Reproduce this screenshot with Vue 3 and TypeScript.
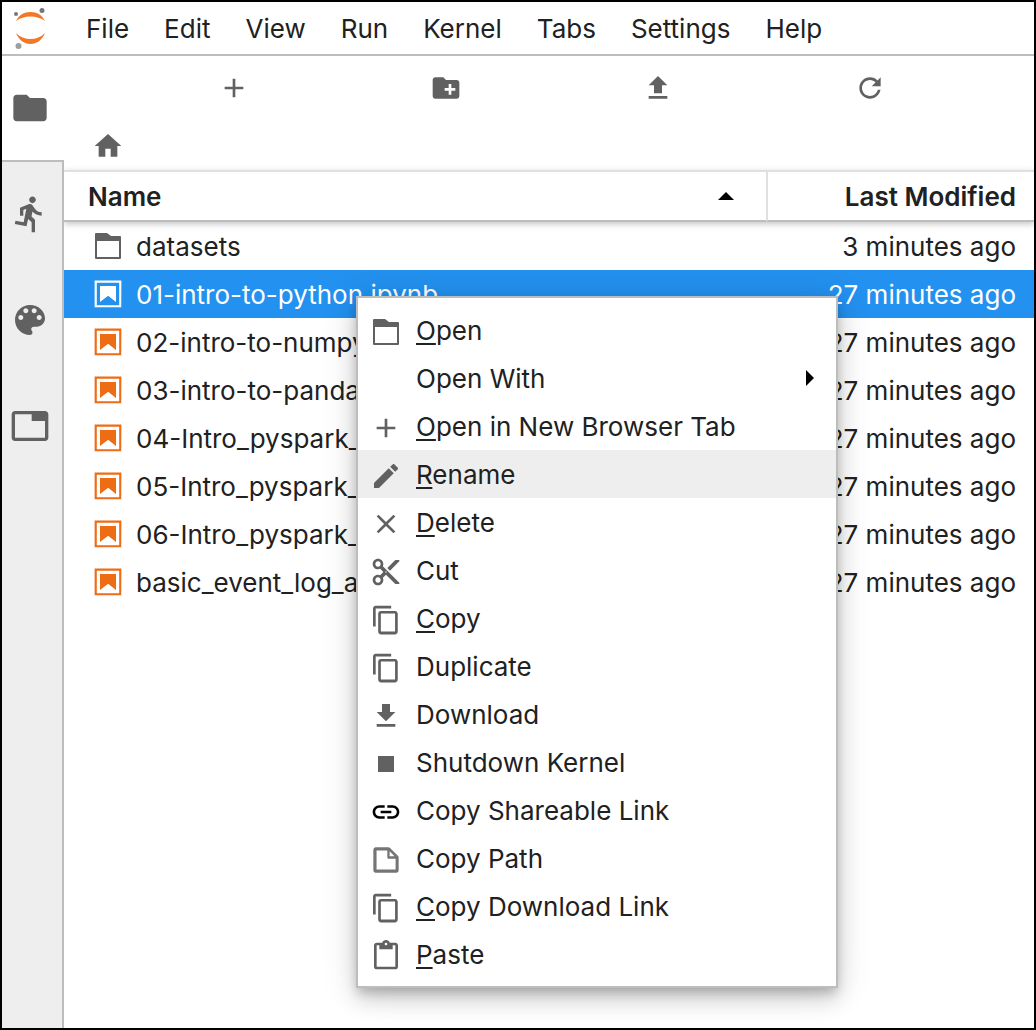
<script setup lang="ts">
import { ref } from 'vue'

interface Icon {
  box: number
  d: string
}

interface FileEntry {
  name: string
  kind: 'folderOutline' | 'notebook'
  modified: string
}

interface MenuItem {
  label: string
  icon?: string
  mnemonic?: boolean
  submenu?: boolean
}

const icons: Record<string, Icon> = {
  folder: { box: 24, d: 'M10 4H4c-1.1 0-1.99.9-1.99 2L2 18c0 1.1.9 2 2 2h16c1.1 0 2-.9 2-2V8c0-1.1-.9-2-2-2h-8l-2-2z' },
  running: { box: 24, d: 'M13.49 5.48c1.1 0 2-.9 2-2s-.9-2-2-2-2 .9-2 2 .9 2 2 2zm-3.6 13.9l1-4.4 2.1 2v6h2v-7.5l-2.1-2 .6-3c1.3 1.5 3.3 2.5 5.5 2.5v-2c-1.9 0-3.5-1-4.3-2.4l-1-1.6c-.4-.6-1-1-1.7-1-.3 0-.5.1-.8.1l-5.2 2.2v4.7h2v-3.4l1.8-.7-1.6 8.1-4.9-1-.4 2 7 1.4z' },
  palette: { box: 24, d: 'M12 3c-4.97 0-9 4.03-9 9s4.03 9 9 9c.83 0 1.5-.67 1.5-1.5 0-.39-.15-.74-.39-1.01-.23-.26-.38-.61-.38-.99 0-.83.67-1.5 1.5-1.5H16c2.76 0 5-2.24 5-5 0-4.42-4.03-8-9-8zm-5.5 9c-.83 0-1.5-.67-1.5-1.5S5.67 9 6.5 9 8 9.67 8 10.5 7.33 12 6.5 12zm3-4C8.67 8 8 7.33 8 6.5S8.67 5 9.5 5s1.5.67 1.5 1.5S10.33 8 9.5 8zm5 0c-.83 0-1.5-.67-1.5-1.5S13.67 5 14.5 5s1.5.67 1.5 1.5S15.33 8 14.5 8zm3 4c-.83 0-1.5-.67-1.5-1.5S16.67 9 17.5 9s1.5.67 1.5 1.5-.67 1.5-1.5 1.5z' },
  tab: { box: 24, d: 'M21 3H3c-1.1 0-2 .9-2 2v14c0 1.1.9 2 2 2h18c1.1 0 2-.9 2-2V5c0-1.1-.9-2-2-2zm0 16H3V5h10v4h8v10z' },
  plus: { box: 24, d: 'M19 13h-6v6h-2v-6H5v-2h6V5h2v6h6v2z' },
  newFolder: { box: 24, d: 'M20 6h-8l-2-2H4c-1.11 0-1.99.89-1.99 2L2 18c0 1.11.89 2 2 2h16c1.11 0 2-.89 2-2V8c0-1.11-.89-2-2-2zm-1 8h-3v3h-2v-3h-3v-2h3V9h2v3h3v2z' },
  upload: { box: 24, d: 'M9 16h6v-6h4l-7-7-7 7h4zm-4 2h14v2H5z' },
  refresh: { box: 18, d: 'M9 13.5c-2.49 0-4.5-2.01-4.5-4.5S6.51 4.5 9 4.5c1.24 0 2.36.52 3.17 1.33L10 8h5V3l-1.76 1.76C12.15 3.68 10.66 3 9 3 5.69 3 3.01 5.69 3.01 9S5.69 15 9 15c2.97 0 5.43-2.16 5.9-5h-1.52c-.46 2-2.24 3.5-4.38 3.5z' },
  home: { box: 24, d: 'M10 20v-6h4v6h5v-8h3L12 3 2 12h3v8z' },
  folderOutline: { box: 32, d: 'M3 4q0-1 1-1h11l4 3h9q1 0 1 1v21q0 1-1 1H4q-1 0-1-1zM5 11v16h22V11z' },
  notebook: { box: 22, d: 'M18.7 3.3v15.4H3.3V3.3h15.4m1.5-1.5H1.8v18.3h18.3l.1-18.3zM16.5 16.5l-5.4-4.3-5.6 4.3v-11h11z' },
  edit: { box: 24, d: 'M3 17.25V21h3.75L17.81 9.94l-3.75-3.75L3 17.25zM20.71 7.04c.39-.39.39-1.02 0-1.41l-2.34-2.34c-.39-.39-1.02-.39-1.41 0l-1.83 1.83 3.75 3.75 1.83-1.83z' },
  close: { box: 24, d: 'M19 6.41L17.59 5 12 10.59 6.41 5 5 6.41 10.59 12 5 17.59 6.41 19 12 13.41 17.59 19 19 17.59 13.41 12z' },
  cut: { box: 24, d: 'M9.64 7.64c.23-.5.36-1.05.36-1.64 0-2.21-1.79-4-4-4S2 3.79 2 6s1.79 4 4 4c.59 0 1.14-.13 1.64-.36L10 12l-2.36 2.36C7.14 14.13 6.59 14 6 14c-2.21 0-4 1.79-4 4s1.79 4 4 4 4-1.79 4-4c0-.59-.13-1.14-.36-1.64L12 14l7 7h3v-1L9.64 7.64zM6 8c-1.1 0-2-.89-2-2s.9-2 2-2 2 .89 2 2-.9 2-2 2zm0 12c-1.1 0-2-.89-2-2s.9-2 2-2 2 .89 2 2-.9 2-2 2zm6-7.5c-.28 0-.5-.22-.5-.5s.22-.5.5-.5.5.22.5.5-.22.5-.5.5zM19 3l-6 6 2 2 7-7V3z' },
  copy: { box: 18, d: 'M11.9 1H3.2C2.4 1 1.7 1.7 1.7 2.5v10.2h1.5V2.5h8.7V1zM14.1 3.9h-8c-.8 0-1.5.7-1.5 1.5v10.2c0 .8.7 1.5 1.5 1.5h8c.8 0 1.5-.7 1.5-1.5V5.4c-.1-.8-.7-1.5-1.5-1.5zM14.1 15.5h-8V5.4h8v10.1z' },
  download: { box: 24, d: 'M19 9h-4V3H9v6H5l7 7 7-7zM5 18v2h14v-2H5z' },
  stop: { box: 24, d: 'M6 6h12v12H6z' },
  link: { box: 24, d: 'M3.9 12c0-1.71 1.39-3.1 3.1-3.1h4V7H7c-2.76 0-5 2.24-5 5s2.24 5 5 5h4v-1.9H7c-1.71 0-3.1-1.39-3.1-3.1zM8 13h8v-2H8v2zm9-6h-4v1.9h4c1.71 0 3.1 1.39 3.1 3.1s-1.39 3.1-3.1 3.1h-4V17h4c2.76 0 5-2.24 5-5s-2.24-5-5-5z' },
  file: { box: 22, d: 'M19.3 8.2l-5.5-5.5c-.3-.3-.7-.5-1.2-.5H3.9c-.8.1-1.6.9-1.6 1.8v14.1c0 .9.7 1.6 1.6 1.6h14.2c.9 0 1.6-.7 1.6-1.6V9.4c.1-.5-.1-.9-.4-1.2zm-5.8-3.3l3.4 3.6h-3.4V4.9zm3.9 12.7H4.7c-.1 0-.2 0-.2-.2V4.7c0-.2.1-.3.2-.3h7.2v4.4s0 .8.3 1.1c.3.3 1.1.3 1.1.3h4.3v7.2s-.1.2-.2.2z' },
  paste: { box: 24, d: 'M19 2h-4.18C14.4.84 13.3 0 12 0c-1.3 0-2.4.84-2.82 2H5c-1.1 0-2 .9-2 2v16c0 1.1.9 2 2 2h14c1.1 0 2-.9 2-2V4c0-1.1-.9-2-2-2zm-7 0c.55 0 1 .45 1 1s-.45 1-1 1-1-.45-1-1 .45-1 1-1zm7 18H5V4h2v3h10V4h2v16z' },
}

const viewBox = (name: string): string => `0 0 ${icons[name].box} ${icons[name].box}`

const menus: string[] = ['File', 'Edit', 'View', 'Run', 'Kernel', 'Tabs', 'Settings', 'Help']

const panels = [
  { icon: 'folder', title: 'File Browser' },
  { icon: 'running', title: 'Running' },
  { icon: 'palette', title: 'Commands' },
  { icon: 'tab', title: 'Tabs' },
]

const tools = [
  { icon: 'plus', title: 'New Launcher' },
  { icon: 'newFolder', title: 'New Folder' },
  { icon: 'upload', title: 'Upload' },
  { icon: 'refresh', title: 'Refresh' },
]

const files: FileEntry[] = [
  { name: 'datasets', kind: 'folderOutline', modified: '3 minutes ago' },
  { name: '01-intro-to-python.ipynb', kind: 'notebook', modified: '27 minutes ago' },
  { name: '02-intro-to-numpy.ipynb', kind: 'notebook', modified: '27 minutes ago' },
  { name: '03-intro-to-pandas.ipynb', kind: 'notebook', modified: '27 minutes ago' },
  { name: '04-Intro_pyspark_.ipynb', kind: 'notebook', modified: '27 minutes ago' },
  { name: '05-Intro_pyspark_.ipynb', kind: 'notebook', modified: '27 minutes ago' },
  { name: '06-Intro_pyspark_.ipynb', kind: 'notebook', modified: '27 minutes ago' },
  { name: 'basic_event_log_analysis.ipynb', kind: 'notebook', modified: '27 minutes ago' },
]

const contextItems: MenuItem[] = [
  { label: 'Open', icon: 'folderOutline', mnemonic: true },
  { label: 'Open With', submenu: true },
  { label: 'Open in New Browser Tab', icon: 'plus', mnemonic: true },
  { label: 'Rename', icon: 'edit', mnemonic: true },
  { label: 'Delete', icon: 'close', mnemonic: true },
  { label: 'Cut', icon: 'cut' },
  { label: 'Copy', icon: 'copy', mnemonic: true },
  { label: 'Duplicate', icon: 'copy' },
  { label: 'Download', icon: 'download' },
  { label: 'Shutdown Kernel', icon: 'stop' },
  { label: 'Copy Shareable Link', icon: 'link' },
  { label: 'Copy Path', icon: 'file' },
  { label: 'Copy Download Link', icon: 'copy', mnemonic: true },
  { label: 'Paste', icon: 'paste', mnemonic: true },
]

const activePanel = ref<number>(0)
const selectedFile = ref<number>(1)
const activeItem = ref<number>(3)
</script>

<template>
  <div class="app">
    <header class="menubar">
      <svg class="logo" viewBox="0 2 40 44" aria-hidden="true">
        <path class="logo-ring" d="M6 17C9 11 14 8 20.500 8S32 11 35 17C31 14 26 12.500 20.500 12.500S10 14 6 17zM6 29C9 36 14 40 20.500 40S32 36 35 29C31 33 26 35 20.500 35S10 33 6 29z" />
        <circle class="logo-dot" cx="6" cy="10" r="2" />
        <circle class="logo-dot" cx="32" cy="6.500" r="2.500" />
        <circle class="logo-dot light" cx="8.500" cy="42" r="3" />
      </svg>
      <nav class="menus">
        <button v-for="menu in menus" :key="menu" type="button">{{ menu }}</button>
      </nav>
    </header>

    <div class="body">
      <aside class="sidebar">
        <button
          v-for="(panel, index) in panels"
          :key="panel.title"
          type="button"
          class="panel-tab"
          :class="{ active: index === activePanel }"
          :aria-label="panel.title"
          @click="activePanel = index"
        >
          <svg class="icon large" :viewBox="viewBox(panel.icon)"><path :d="icons[panel.icon].d" /></svg>
        </button>
      </aside>

      <main class="browser">
        <div class="toolbar">
          <button v-for="tool in tools" :key="tool.title" type="button" :aria-label="tool.title">
            <svg class="icon" :viewBox="viewBox(tool.icon)"><path :d="icons[tool.icon].d" /></svg>
          </button>
        </div>
        <div class="crumbs">
          <a href="#" aria-label="Home">
            <svg class="icon" :viewBox="viewBox('home')"><path :d="icons.home.d" /></svg>
          </a>
        </div>

        <table class="listing">
          <thead>
            <tr>
              <th scope="col" class="name">
                <div class="heading">
                  <span class="text">Name</span>
                  <svg class="sort" viewBox="0 0 16 8" aria-hidden="true"><path d="M0 8L8 0l8 8z" /></svg>
                </div>
              </th>
              <th scope="col" class="modified">
                <div class="text">Last Modified</div>
              </th>
            </tr>
          </thead>
          <tbody>
            <tr
              v-for="(file, index) in files"
              :key="file.name"
              :class="{ selected: index === selectedFile }"
              @click="selectedFile = index"
            >
              <td>
                <div class="entry">
                  <svg class="icon" :class="file.kind" :viewBox="viewBox(file.kind)">
                    <path fill-rule="evenodd" :d="icons[file.kind].d" />
                  </svg>
                  <span class="text">{{ file.name }}</span>
                </div>
              </td>
              <td class="modified">
                <div class="text">{{ file.modified }}</div>
              </td>
            </tr>
          </tbody>
        </table>
      </main>
    </div>

    <div class="context" role="menu">
      <button
        v-for="(item, index) in contextItems"
        :key="item.label"
        type="button"
        role="menuitem"
        :class="{ current: index === activeItem }"
        @mouseenter="activeItem = index"
      >
        <span class="slot">
          <svg v-if="item.icon" class="icon" :class="item.icon" :viewBox="viewBox(item.icon)">
            <path fill-rule="evenodd" :d="icons[item.icon].d" />
          </svg>
        </span>
        <span class="text label"><u v-if="item.mnemonic">{{ item.label.charAt(0) }}</u>{{ item.mnemonic ? item.label.slice(1) : item.label }}</span>
        <svg v-if="item.submenu" class="arrow" viewBox="0 0 8 16" aria-hidden="true"><path d="M0 0l8 8-8 8z" /></svg>
      </button>
    </div>
  </div>
</template>

<style>
body {
  margin: 0;
}
</style>

<style scoped>
.app {
  position: relative;
  display: flex;
  flex-direction: column;
  box-sizing: border-box;
  min-height: 100vh;
  border: 2px solid #000;
  background: #fff;
  color: #212121;
  font-family: Inter, "Liberation Sans", sans-serif;
  font-size: 26px;
  line-height: 46px;
}

button {
  margin: 0;
  padding: 0;
  border: 0;
  background: none;
  color: inherit;
  font: inherit;
}

.text {
  padding-top: 2px;
}

.icon {
  display: block;
  flex: none;
  width: 32px;
  height: 32px;
  fill: #616161;
}

.icon.large {
  width: 40px;
  height: 40px;
}

.menubar {
  display: flex;
  align-items: center;
  height: 52px;
  border-bottom: 2px solid #bdbdbd;
}

.logo {
  width: 40px;
  height: 44px;
  margin: 0 8px;
  overflow: visible;
}

.logo-ring {
  fill: #f37726;
}

.logo-dot {
  fill: #767677;
}

.logo-dot.light {
  fill: #9e9e9e;
}

.menus {
  display: flex;
  margin-left: 10px;
}

.menus button {
  padding: 2px 17px 0 18px;
}

.body {
  display: flex;
  flex: 1;
}

.sidebar {
  display: flex;
  flex-direction: column;
  flex: none;
  width: 62px;
  background: #bdbdbd;
}

.sidebar::after {
  content: "";
  flex: 1;
  margin-right: 2px;
  background: #eee;
}

.panel-tab {
  display: flex;
  align-items: center;
  box-sizing: border-box;
  height: 106px;
  margin-right: 2px;
  padding: 0 0 2px 8px;
  background: #eee;
}

.panel-tab.active {
  height: 104px;
  margin: 0 0 2px;
  padding-bottom: 0;
  background: #fff;
}

.browser {
  flex: 1;
  min-width: 0;
  overflow: hidden;
}

.toolbar {
  display: flex;
  height: 64px;
  padding: 0 58px 0 64px;
}

.toolbar button {
  display: flex;
  flex: 1;
  align-items: center;
  justify-content: center;
}

.crumbs {
  display: flex;
  height: 40px;
  padding: 10px 28px 0;
}

.listing {
  width: 100%;
  border-spacing: 0;
  table-layout: fixed;
}

.listing thead {
  box-shadow: 0 2px 6px rgba(0, 0, 0, 0.24);
}

th {
  height: 48px;
  padding: 0;
  border-top: 2px solid #e0e0e0;
  border-bottom: 2px solid #bdbdbd;
  background: #fff;
  font-weight: 600;
  text-align: left;
}

td {
  height: 48px;
  padding: 0;
}

th.modified {
  width: 248px;
  border-left: 2px solid #e0e0e0;
}

.modified {
  padding-right: 18px;
  text-align: right;
}

.heading {
  display: flex;
  align-items: center;
  justify-content: space-between;
  padding: 0 32px 0 24px;
}

.sort {
  width: 16px;
  height: 8px;
  fill: #000;
}

.entry {
  display: flex;
  align-items: center;
  gap: 12px;
  padding-left: 28px;
  white-space: nowrap;
}

.notebook {
  fill: #ee6c14;
}

.selected {
  background: #2391ef;
  color: #fff;
}

.selected .icon {
  fill: #fff;
}

.context {
  position: absolute;
  top: 294px;
  left: 354px;
  display: flex;
  flex-direction: column;
  width: 478px;
  padding: 8px 0;
  border: 2px solid #bdbdbd;
  background: #fff;
  box-shadow: 0 6px 10px -2px rgba(0, 0, 0, 0.2), 0 12px 20px rgba(0, 0, 0, 0.14), 0 2px 36px rgba(0, 0, 0, 0.12);
}

.context button {
  display: flex;
  align-items: center;
  height: 48px;
  padding: 0 22px 0 12px;
  text-align: left;
}

.context .current {
  background: #eee;
}

.slot {
  width: 32px;
  margin-right: 14px;
  padding-top: 4px;
}

.label {
  flex: 1;
}

.label u {
  text-decoration-thickness: 2px;
  text-underline-offset: 3px;
}

.icon.link {
  fill: #000;
}

.icon.file {
  fill: #757575;
}

.arrow {
  width: 8px;
  height: 16px;
  fill: #000;
}
</style>
